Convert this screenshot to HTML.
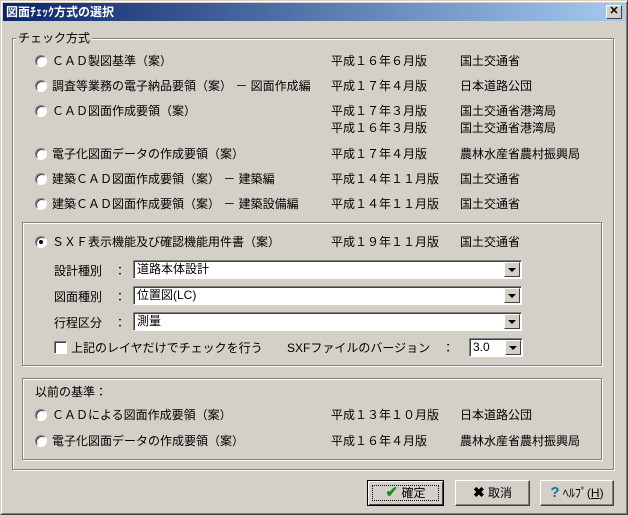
<!DOCTYPE html>
<html><head><meta charset="utf-8"><style>
*{margin:0;padding:0;box-sizing:border-box}
body{width:628px;height:515px;background:#d4d0c8;font-family:"Liberation Sans","Noto Sans CJK JP",sans-serif;font-size:12px;color:#000;position:relative;overflow:hidden}
.win{position:absolute;left:0;top:0;width:628px;height:515px;border:1px solid;border-color:#d4d0c8 #404040 #404040 #d4d0c8;box-shadow:inset 1px 1px 0 #fff,inset -1px -1px 0 #808080}
.title{position:absolute;left:3px;top:3px;width:622px;height:18px;background:linear-gradient(90deg,#0a246a,#a6caf0);color:#fff;font-weight:bold;font-size:12px;line-height:18px;padding-left:3px}
.close{position:absolute;left:606px;top:5px;width:16px;height:14px;background:#d4d0c8;border:1px solid;border-color:#fff #404040 #404040 #fff;font-size:11px;line-height:11px;text-align:center;color:#000;font-weight:bold}
.grp{position:absolute;border:1px solid #808080;box-shadow:1px 1px 0 #fff,inset 1px 1px 0 #fff}
.lg{position:absolute;background:#d4d0c8;padding:0 2px;line-height:14px}
.t{position:absolute;white-space:nowrap;line-height:14px}
.r{position:absolute;width:12px;height:12px;border-radius:50%;background:#fff;border:1px solid;border-color:#808080 #fff #fff #808080;box-shadow:inset 1px 1px 0 #404040}
.r.on::after{content:"";position:absolute;left:3px;top:3px;width:4px;height:4px;border-radius:50%;background:#000}
.cb{position:absolute;left:133px;width:389px;height:19px;background:#fff;border:1px solid;border-color:#808080 #fff #fff #808080;box-shadow:inset 1px 1px 0 #404040;padding-left:3px;line-height:16px}
.ar{position:absolute;right:1px;top:1px;width:16px;height:15px;background:#d4d0c8;border:1px solid;border-color:#fff #404040 #404040 #fff}
.ar::after{content:"";position:absolute;left:3px;top:5px;border-left:4px solid transparent;border-right:4px solid transparent;border-top:4px solid #000}
.btn{position:absolute;top:480px;height:26px;background:#d4d0c8;border:1px solid;border-color:#fff #404040 #404040 #fff;box-shadow:inset -1px -1px 0 #808080;text-align:center;line-height:23px}
</style></head><body>
<div class="win"></div>
<div class="title">図面ﾁｪｯｸ方式の選択</div>
<div class="close">✕</div>

<div class="grp" style="left:12px;top:38px;width:602px;height:432px"></div>
<div class="lg" style="left:16px;top:31px">チェック方式</div>

<div class="r" style="left:35px;top:55px"></div><div class="t" style="left:52px;top:54px">ＣＡＤ製図基準（案）</div>
<div class="t" style="left:331px;top:54px">平成１６年６月版</div><div class="t" style="left:460px;top:54px">国土交通省</div>

<div class="r" style="left:35px;top:80px"></div><div class="t" style="left:52px;top:79px">調査等業務の電子納品要領（案） －  図面作成編</div>
<div class="t" style="left:331px;top:79px">平成１７年４月版</div><div class="t" style="left:460px;top:79px">日本道路公団</div>

<div class="r" style="left:35px;top:105px"></div><div class="t" style="left:52px;top:104px">ＣＡＤ図面作成要領（案）</div>
<div class="t" style="left:331px;top:104px">平成１７年３月版</div><div class="t" style="left:460px;top:104px">国土交通省港湾局</div>
<div class="t" style="left:331px;top:121px">平成１６年３月版</div><div class="t" style="left:460px;top:121px">国土交通省港湾局</div>

<div class="r" style="left:35px;top:148px"></div><div class="t" style="left:52px;top:147px">電子化図面データの作成要領（案）</div>
<div class="t" style="left:331px;top:147px">平成１７年４月版</div><div class="t" style="left:460px;top:147px">農林水産省農村振興局</div>

<div class="r" style="left:35px;top:173px"></div><div class="t" style="left:52px;top:172px">建築ＣＡＤ図面作成要領（案） －  建築編</div>
<div class="t" style="left:331px;top:172px">平成１４年１１月版</div><div class="t" style="left:460px;top:172px">国土交通省</div>

<div class="r" style="left:35px;top:198px"></div><div class="t" style="left:52px;top:197px">建築ＣＡＤ図面作成要領（案） －  建築設備編</div>
<div class="t" style="left:331px;top:197px">平成１４年１１月版</div><div class="t" style="left:460px;top:197px">国土交通省</div>

<div class="grp" style="left:22px;top:222px;width:580px;height:144px"></div>
<div class="r on" style="left:35px;top:236px"></div><div class="t" style="left:52px;top:235px">ＳＸＦ表示機能及び確認機能用件書（案）</div>
<div class="t" style="left:331px;top:235px">平成１９年１１月版</div><div class="t" style="left:460px;top:235px">国土交通省</div>

<div class="t" style="left:54px;top:264px">設計種別　：</div>
<div class="cb" style="top:260px">道路本体設計<div class="ar"></div></div>
<div class="t" style="left:54px;top:290px">図面種別　：</div>
<div class="cb" style="top:286px">位置図(LC)<div class="ar"></div></div>
<div class="t" style="left:54px;top:316px">行程区分　：</div>
<div class="cb" style="top:312px">測量<div class="ar"></div></div>

<div style="position:absolute;left:54px;top:341px;width:13px;height:13px;background:#fff;border:1px solid;border-color:#808080 #fff #fff #808080;box-shadow:inset 1px 1px 0 #404040"></div>
<div class="t" style="left:71px;top:341px">上記のレイヤだけでチェックを行う</div>
<div class="t" style="left:287px;top:341px">SXFファイルのバージョン　：</div>
<div class="cb" style="left:469px;width:54px;top:338px">3.0<div class="ar"></div></div>

<div class="grp" style="left:22px;top:378px;width:580px;height:82px"></div>
<div class="t" style="left:35px;top:385px">以前の基準：</div>
<div class="r" style="left:35px;top:409px"></div><div class="t" style="left:52px;top:408px">ＣＡＤによる図面作成要領（案）</div>
<div class="t" style="left:331px;top:408px">平成１３年１０月版</div><div class="t" style="left:460px;top:408px">日本道路公団</div>
<div class="r" style="left:35px;top:435px"></div><div class="t" style="left:52px;top:434px">電子化図面データの作成要領（案）</div>
<div class="t" style="left:331px;top:434px">平成１６年４月版</div><div class="t" style="left:460px;top:434px">農林水産省農村振興局</div>

<div class="btn" style="left:367px;width:77px;border:1px solid #000;box-shadow:inset 1px 1px 0 #fff,inset -1px -1px 0 #404040"><div style="position:absolute;left:4px;top:4px;right:4px;bottom:4px;border:1px dotted #000"></div><span style="color:#1a8a2a;font-weight:bold;font-size:15px">✔</span> 確定</div>
<div class="btn" style="left:455px;width:75px"><span style="font-weight:bold;font-size:14px">✖</span> 取消</div>
<div class="btn" style="left:540px;width:74px"><span style="color:#00809a;font-weight:bold;font-size:15px">?</span> ﾍﾙﾌﾟ(<u>H</u>)</div>
</body></html>
